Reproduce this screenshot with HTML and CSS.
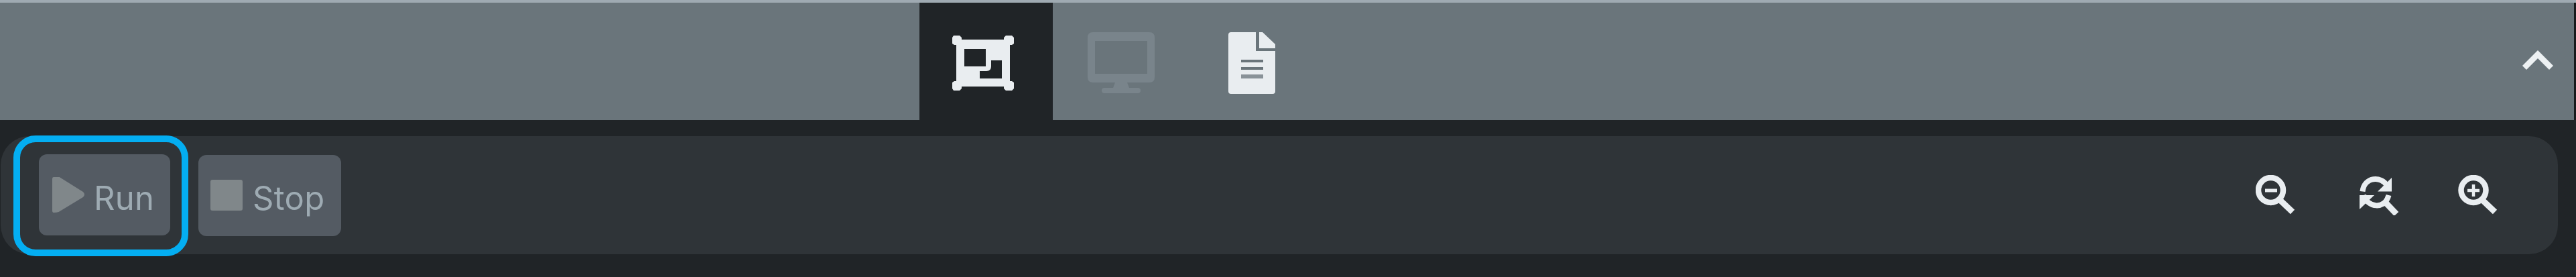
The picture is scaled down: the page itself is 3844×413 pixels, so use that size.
FILE: index.html
```html
<!DOCTYPE html>
<html lang="en">
<head>
<meta charset="utf-8">
<title>Toolbar</title>
<link rel="stylesheet" href="styles.css">
</head>
<body>
<header class="tabs">
  <div class="tab tab-active">
    <svg class="icon-group" viewBox="0 0 94 82"><path fill="#e9edf0" fill-rule="evenodd" d="M3 0H12L15 3V6H78V3L81 0H90L93 3V12L90 14H87V68H90L93 70V79L90 82H81L78 79V76H15V79L12 82H3L1 79V70L4 68H7V14H4L1 12V3ZM19 20V46H51V20ZM59 37V46Q59 53 52 53H42V64H75V37Z"/></svg>
  </div>
  <div class="tab tab-screen">
    <svg class="icon-screen" viewBox="0 0 100 91"><path fill="#79848b" fill-rule="evenodd" d="M8 0H92Q100 0 100 8V67Q100 75 92 75H59L62 83H75Q79 83 79 87Q79 91 75 91H25Q21 91 21 87Q21 83 25 83H38L41 75H8Q0 75 0 67V8Q0 0 8 0ZM11 13V62H89V13Z"/></svg>
  </div>
  <div class="tab tab-doc">
    <svg class="icon-doc" viewBox="0 0 70 92"><g fill="#e9edf0"><path fill-rule="evenodd" d="M4 0H41V28H70V88Q70 92 66 92H4Q0 92 0 88V4Q0 0 4 0ZM19 41V45H52V41ZM19 52V56H52V52Z"/><path d="M46 0H51L70 18V24H46Z"/></g><path fill="#899298" d="M19 63H52V69H19Z"/></svg>
  </div>
  <svg class="icon-chevron" viewBox="0 0 48 32"><path fill="none" stroke="#edf1f3" stroke-width="8.5" d="M4 27L24 7L44 27"/></svg>
</header>
<main class="toolbar">
  <div class="focus-ring">
    <button class="btn btn-run"><svg class="icon-play" viewBox="0 0 45 53" preserveAspectRatio="none"><path fill="#80878a" d="M2 0H10L43 22Q47 26 43 30L9 52Q6 53 2 53Q0 53 0 50V3Q0 0 2 0Z"/></svg><span class="label label-run">Run</span></button>
  </div>
  <button class="btn btn-stop"><i class="icon-stop"></i><span class="label label-stop">Stop</span></button>
  <div class="zooms">
    <svg class="icon-zoom" viewBox="0 0 60 60"><g fill="none" stroke="#e9edf0"><circle cx="22.500" cy="22.500" r="18.500" stroke-width="8.500"/><path stroke-width="9" d="M36 37L55 55"/><path stroke-width="5" d="M14 23H32"/></g></svg>
    <svg class="icon-zoom icon-reset" viewBox="0 0 60 60"><g fill="none" stroke="#e9edf0" stroke-width="8"><path d="M4.500 24.500C7 2 33 1 41 16"/><path d="M6 30C12 49 38 52 43.500 30"/><path stroke-width="9" d="M37 39L55 58"/></g><path fill="#e9edf0" d="M48 4V24.500H27ZM0 30H22L0 51Z"/></svg>
    <svg class="icon-zoom" viewBox="0 0 60 60"><g fill="none" stroke="#e9edf0"><circle cx="23" cy="22.500" r="18.500" stroke-width="8.500"/><path stroke-width="9" d="M36 37L55 55"/><path stroke-width="4.500" d="M14 23H32M23 14V32"/></g></svg>
  </div>
</main>
</body>
</html>
```
FILE: styles.css
```css
* { box-sizing: border-box; }
body {
  margin: 0;
  height: 413px;
  overflow: hidden;
  background: #202427;
  font-family: Inter, "Liberation Sans", sans-serif;
}
svg { display: block; flex: none; }
.tabs {
  display: flex;
  align-items: stretch;
  height: 179px;
  padding-left: 1372px;
  border-top: 4px solid #9faab2;
  background: linear-gradient(to right, #6a757b calc(100% - 3px), #171a1c calc(100% - 3px));
}
.tab { display: flex; align-items: flex-start; }
.tab-active { width: 199px; padding: 49px 0 0 48px; background: #202427; }
.tab-screen { width: 211px; padding: 44px 0 0 52px; }
.tab-doc { width: 180px; padding: 44px 0 0 51px; }
.icon-group { width: 94px; height: 82px; }
.icon-screen { width: 100px; height: 91px; }
.icon-doc { width: 70px; height: 92px; }
.icon-chevron { width: 48px; height: 32px; margin: 70px 33px 0 auto; }
.toolbar {
  display: flex;
  align-items: center;
  height: 176px;
  margin: 24px 27px 0 1px;
  padding: 0 89px 0 19px;
  border-radius: 43px;
  background: #2f3438;
}
.focus-ring {
  flex: none;
  width: 261px;
  height: 180px;
  margin-top: 2px;
  padding: 18px 0 0 28px;
  border: 10px solid #04aef2;
  border-radius: 33px;
}
.btn {
  display: flex;
  flex: none;
  align-items: flex-start;
  height: 121px;
  border: 0;
  border-radius: 12px;
  background: #545b63;
  color: #9eabb3;
  font: inherit;
}
.btn-run { width: 196px; padding: 34px 0 0 20px; }
.btn-stop { width: 213px; margin-left: 15px; padding: 37px 0 0 18px; }
.icon-play { width: 48px; height: 53px; }
.icon-stop { flex: none; width: 48px; height: 46px; border-radius: 3px; background: #80878a; }
.label { font-size: 49px; line-height: 60px; }
.label-run { margin: 2px 0 0 14px; letter-spacing: 0.3px; }
.label-stop { margin: -2px 0 0 15px; letter-spacing: 0.3px; }
.zooms { display: flex; align-items: flex-start; gap: 87px; margin-left: auto; }
.icon-zoom { width: 60px; height: 60px; }
.icon-reset { margin-left: 8px; }
```
